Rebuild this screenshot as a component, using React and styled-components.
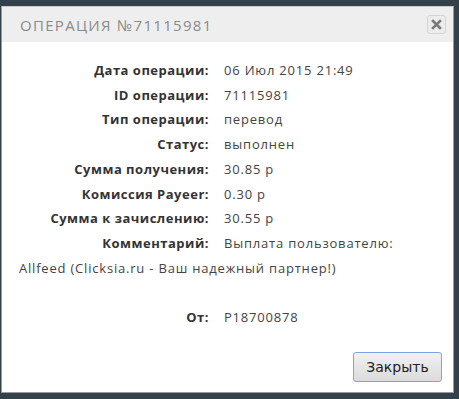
import React from 'react'
import styled, { createGlobalStyle } from 'styled-components'

const Global = createGlobalStyle`
  body {
    margin: 0;
    background: #33424a;
    font-family: 'Open Sans', 'Liberation Sans', sans-serif;
  }
`

const Page = styled.div`
  width: 459px;
  height: 399px;
  padding: 6px 0 0 1px;
  box-sizing: border-box;
`

const Dialog = styled.div`
  width: 453px;
  height: 387px;
  box-sizing: border-box;
  background: #fff;
  border: 1px solid #9a9a9a;
  border-top-color: #c8c8c8;
  display: flex;
  flex-direction: column;
`

const Header = styled.div`
  height: 35px;
  background: #eeeeee;
  display: flex;
  align-items: center;
  justify-content: space-between;
  padding: 0 7px 0 18px;
`

const Title = styled.div`
  font-size: 15px;
  color: #8a8a8a;
  letter-spacing: 1.3px;
  text-transform: uppercase;
`

const CloseBtn = styled.button`
  width: 19px;
  height: 19px;
  padding: 0;
  border: 1px solid #d4d4d4;
  border-radius: 3px;
  background: #ececec;
  display: flex;
  align-items: center;
  justify-content: center;
`

const Body = styled.div`
  flex: 1;
  padding: 16px 14px 0 17px;
  font-size: 13px;
  line-height: 24.7px;
  letter-spacing: 0.8px;
  color: #444;
`

const Row = styled.div`
  min-height: ${p => (p.empty ? '25px' : 'auto')};
`

const Label = styled.span`
  display: inline-block;
  width: 190px;
  text-align: right;
  font-weight: 700;
  letter-spacing: 0.5px;
  color: #333;
  margin-right: 15px;
`

const Footer = styled.div`
  display: flex;
  justify-content: flex-end;
  padding: 0 11px 10px 0;
`

const Button = styled.button`
  width: 89px;
  height: 30px;
  border: 1px solid #7ea3e0;
  border-radius: 3px;
  background: linear-gradient(#f2f2f2, #e6e6e6 50%, #dcdcdc);
  font-family: 'DejaVu Sans', sans-serif;
  font-size: 14px;
  color: #222;
`

const rows = [
  ['Дата операции:', '06 Июл 2015 21:49'],
  ['ID операции:', '71115981'],
  ['Тип операции:', 'перевод'],
  ['Статус:', 'выполнен'],
  ['Сумма получения:', '30.85 р'],
  ['Комиссия Payeer:', '0.30 р'],
  ['Сумма к зачислению:', '30.55 р'],
  ['Комментарий:', 'Выплата пользователю: Allfeed (Clicksia.ru - Ваш надежный партнер!)'],
]

export default function App() {
  return (
    <Page>
      <Global />
      <Dialog>
        <Header>
          <Title>Операция №71115981</Title>
          <CloseBtn>
            <svg width="11" height="11" viewBox="0 0 11 11">
              <path d="M2 2 L9 9 M9 2 L2 9" stroke="#7a7a7a" strokeWidth="2.6" strokeLinecap="square" />
            </svg>
          </CloseBtn>
        </Header>
        <Body>
          {rows.map(([label, value]) => (
            <Row key={label}>
              <Label>{label}</Label>
              {value}
            </Row>
          ))}
          <Row empty />
          <Row>
            <Label>От:</Label>
            P18700878
          </Row>
        </Body>
        <Footer>
          <Button>Закрыть</Button>
        </Footer>
      </Dialog>
    </Page>
  )
}
